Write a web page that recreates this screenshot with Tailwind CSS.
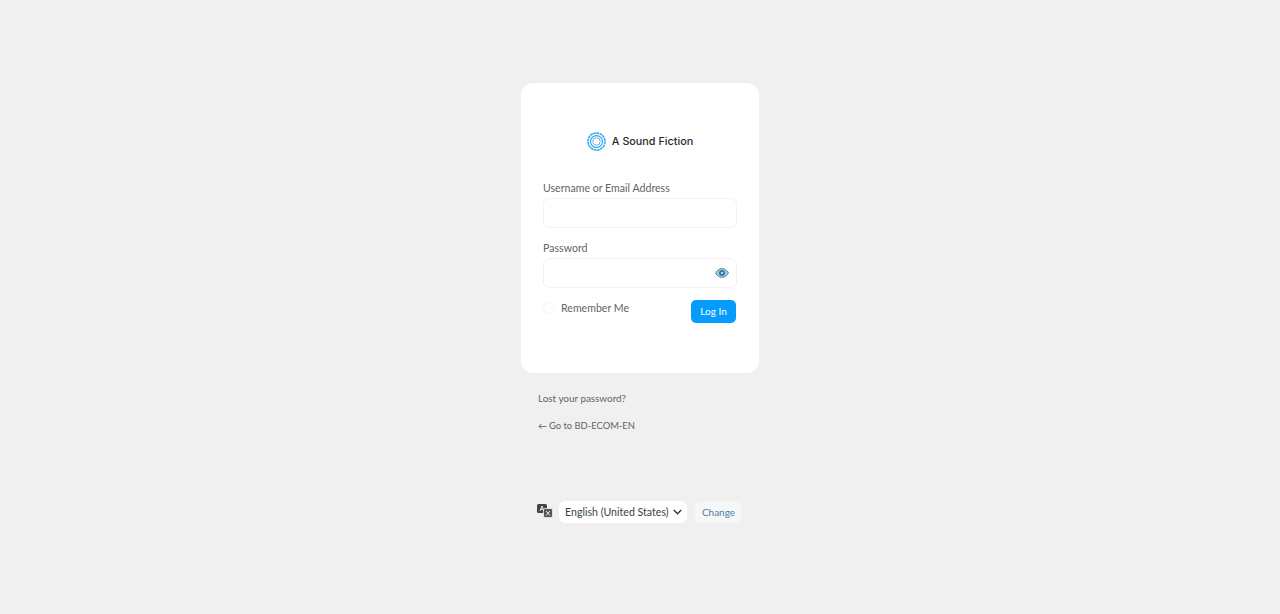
<!DOCTYPE html>
<html lang="en">
<head>
<meta charset="utf-8">
<title>Log In</title>
<script src="https://cdn.jsdelivr.net/npm/@tailwindcss/browser@4"></script>
</head>
<body class="bg-[#f0f0f0] h-[614px] overflow-hidden font-['Lato','Noto_Sans',sans-serif] text-[#5f6468]">
<main class="w-[238px] mx-auto pt-[83px]">
  <form class="bg-white rounded-[12px] h-[290px] px-[22px] pt-[48px]">
    <div class="flex items-center justify-center gap-[6px] h-[20px]">
      <svg class="w-[19px] h-[19px]" viewBox="0 0 20 20" fill="none" stroke="#35abf5">
        <circle cx="10" cy="10" r="9" stroke-width="1.7" stroke-dasharray="3 0.5"/>
        <circle cx="10" cy="10" r="6.3" stroke-width="1.3"/>
        <circle cx="10" cy="10" r="3.9" stroke-width="1" stroke="#6fa9cc"/>
      </svg>
      <span class="font-['Inter',sans-serif] text-[10.8px] font-medium text-[#2b2b2b] leading-none pt-[2px]">A Sound Fiction</span>
    </div>
    <label class="block text-[10.6px] leading-[14px] mt-[30px] whitespace-nowrap">Username or Email Address</label>
    <div class="h-[30px] mt-[3px] rounded-[6px] border border-[#f2f2f2] w-[194px]"></div>
    <label class="block text-[10.6px] leading-[14px] mt-[13px]">Password</label>
    <div class="flex items-center justify-end pr-[7px] h-[30px] mt-[3px] rounded-[6px] border border-[#f2f2f2] w-[194px]">
      <svg class="w-[14px] h-[10px]" viewBox="0 0 14 10">
        <path d="M0.5 5C2.2 2 4.4 0.6 7 0.6S11.8 2 13.5 5C11.8 8 9.6 9.4 7 9.4S2.2 8 0.5 5Z" fill="#a9c9dc" stroke="#4a86a5" stroke-width="0.9"/>
        <circle cx="7" cy="5" r="3" fill="#2a7aa8"/>
        <circle cx="7" cy="5" r="1.2" fill="#b9d6e6"/>
      </svg>
    </div>
    <div class="flex items-start justify-between mt-[12px] w-[193px]">
      <label class="flex items-center gap-[6px] text-[10.6px] leading-[14px] mt-[1px] whitespace-nowrap">
        <span class="w-[12px] h-[12px] rounded-full border border-[#f4f4f4]"></span>
        Remember Me
      </label>
      <button type="button" class="w-[45px] h-[23px] rounded-[5px] bg-[#069cfb] text-white text-[10px] leading-none pb-px">Log In</button>
    </div>
  </form>
  <p class="text-[9.9px] leading-[14px] mt-[18px] ml-[17px] whitespace-nowrap">Lost your password?</p>
  <p class="flex items-center gap-[2px] text-[9.4px] leading-[14px] mt-[14px] ml-[17px] whitespace-nowrap"><span class="text-[9px]">←</span><span>Go to BD-ECOM-EN</span></p>
  <div class="flex items-center mt-[68px] ml-[16px] w-[210px]">
    <svg class="w-[16px] h-[14px] -mt-[3px]" viewBox="0 0 16 14">
      <rect x="0" y="0" width="10" height="9" rx="1.5" fill="#444"/>
      <path d="M3 7L5 2L7 7M3.8 5.4H6.2" fill="none" stroke="#fff" stroke-width="0.9"/>
      <rect x="6.5" y="4.5" width="9" height="9" rx="1.5" fill="#555" stroke="#f0f0f0" stroke-width="0.8"/>
      <path d="M9 7L13 11.5M13 7L9 11.5" stroke="#fff" stroke-width="0.9"/>
    </svg>
    <div class="flex items-center justify-between w-[128px] h-[22px] ml-[6px] pl-[6px] pr-[5px] bg-white rounded-[6px] text-[10.6px] text-[#3a3f43] whitespace-nowrap">
      <span class="pt-px">English (United States)</span>
      <svg class="w-[9px] h-[6px]" viewBox="0 0 9 6" fill="none" stroke="#2c3338" stroke-width="1.3"><path d="M0.8 1L4.5 4.8L8.2 1"/></svg>
    </div>
    <button type="button" class="w-[47px] h-[21px] ml-[8px] rounded-[6px] bg-[#f6f7f7] text-[#4f7fa3] text-[10px] leading-none">Change</button>
  </div>
</main>
</body>
</html>
